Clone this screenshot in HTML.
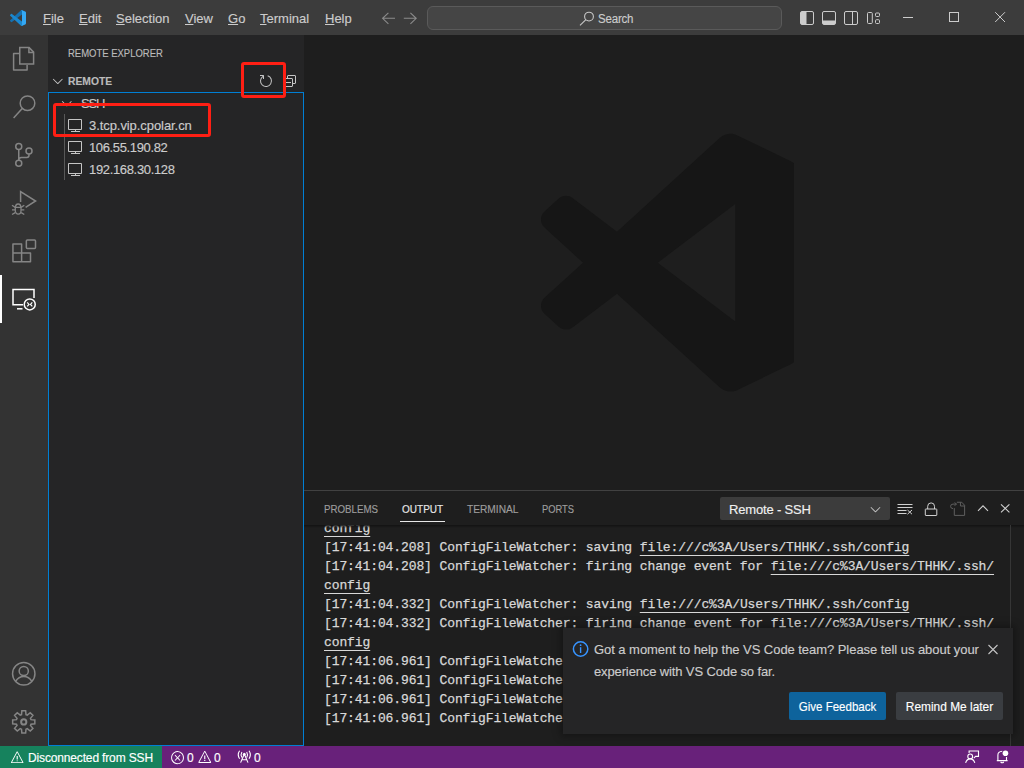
<!DOCTYPE html>
<html><head><meta charset="utf-8">
<style>
*{box-sizing:border-box;margin:0;padding:0}
html,body{width:1024px;height:768px;overflow:hidden;background:#1e1e1e;font-family:"Liberation Sans",sans-serif;}
.a{position:absolute;white-space:nowrap;-webkit-text-stroke:0.15px currentColor}
svg{position:absolute;overflow:visible}
#title{position:absolute;left:0;top:0;width:1024px;height:35px;background:#3c3c3c}
.mi{position:absolute;top:1px;height:35px;line-height:35px;font-size:13px;color:#cccccc;-webkit-text-stroke:0.15px currentColor}
.mi u{text-decoration:underline;text-underline-offset:1px;text-decoration-thickness:1px}
#act{position:absolute;left:0;top:35px;width:48px;height:711px;background:#333333}
#side{position:absolute;left:48px;top:35px;width:256px;height:711px;background:#252526}
#editor{position:absolute;left:304px;top:35px;width:720px;height:456px;background:#1e1e1e}
#panel{position:absolute;left:304px;top:490px;width:720px;height:256px;background:#1e1e1e;border-top:1px solid #414141}
#status{position:absolute;left:0;top:746px;width:1024px;height:22px;background:#68217a}
.pt{position:absolute;top:9px;-webkit-text-stroke:0.15px currentColor;transform-origin:0 0;height:16px;line-height:16px;font-size:11px;white-space:nowrap}
.ol{position:absolute;left:0;height:19px;line-height:19px;font-family:"Liberation Mono",monospace;font-size:13px;letter-spacing:-0.1px;color:#d8d8d8;-webkit-text-stroke:0.25px #d8d8d8;white-space:pre}
.ol u{text-decoration:underline;text-underline-offset:4px}
</style></head><body>
<div id="title">
  <svg style="left:10px;top:10px" width="16" height="16" viewBox="0 0 100 100">
    <path fill="#1570b0" d="M96.4614 10.7962L75.8569 0.875542C73.4719 -0.272773 70.6217 0.211611 68.75 2.08333L1.29858 63.5832C-0.515693 65.2373 -0.513607 68.0937 1.30308 69.7452L6.81272 74.754C8.29793 76.1042 10.5347 76.2036 12.1338 74.9905L93.3609 13.3699C96.086 11.3026 100 13.2462 100 16.6667V16.4275C100 14.0265 98.6246 11.8378 96.4614 10.7962Z"/>
    <path fill="#1a88d0" d="M96.4614 89.2038L75.8569 99.1245C73.4719 100.273 70.6217 99.7884 68.75 97.9167L1.29858 36.4169C-0.515693 34.7627 -0.513607 31.9063 1.30308 30.2548L6.81272 25.246C8.29793 23.8958 10.5347 23.7964 12.1338 25.0095L93.3609 86.6301C96.086 88.6974 100 86.7538 100 83.3334V83.5726C100 85.9735 98.6246 88.1622 96.4614 89.2038Z"/>
    <path fill="#34a8f4" d="M75.8578 99.1263C73.4721 100.274 70.6219 99.7885 68.75 97.9166C71.0564 100.223 75 98.5895 75 95.3278V4.67213C75 1.41039 71.0564 -0.223106 68.75 2.08329C70.6219 0.211402 73.4721 -0.273666 75.8578 0.873633L96.4587 10.7807C98.6234 11.8217 100 14.0112 100 16.4132V83.5871C100 85.9891 98.6234 88.1786 96.4586 89.2196L75.8578 99.1263Z"/>
  </svg>
  <div class="mi" style="left:43px"><u>F</u>ile</div>
  <div class="mi" style="left:79px"><u>E</u>dit</div>
  <div class="mi" style="left:116px"><u>S</u>election</div>
  <div class="mi" style="left:185px"><u>V</u>iew</div>
  <div class="mi" style="left:228px"><u>G</u>o</div>
  <div class="mi" style="left:260px"><u>T</u>erminal</div>
  <div class="mi" style="left:325px"><u>H</u>elp</div>
  <svg style="left:0;top:0" width="1024" height="35" fill="none" stroke="#8b8b8b" stroke-width="1.1">
    <path d="M388.4 12.8L382.6 18.3L388.4 23.8M382.6 18.3H395"/>
    <path d="M410.4 12.8L416.2 18.3L410.4 23.8M416.2 18.3H403.8"/>
  </svg>
  <div style="position:absolute;left:427px;top:6px;width:355px;height:24px;border:1px solid #5a5a5a;border-radius:6px;background:#454545"></div>
  <svg style="left:0;top:0" width="1024" height="35" fill="none" stroke="#c8c8c8" stroke-width="1.1">
    <circle cx="589" cy="16.6" r="4.4"/>
    <path d="M585.9 19.7L580 25.4"/>
  </svg>
  <div class="a" style="left:598px;top:10px;height:18px;line-height:18px;font-size:12.5px;color:#cccccc;letter-spacing:-0.2px;transform:scaleX(0.92);transform-origin:0 0">Search</div>
  <svg style="left:0;top:0" width="1024" height="35" fill="none" stroke="#cccccc" stroke-width="1">
    <rect x="800.5" y="11.5" width="13" height="13" rx="1.5"/>
    <rect x="801" y="12" width="5.5" height="12" fill="#cccccc" stroke="none"/>
    <rect x="822.5" y="11.5" width="13" height="13" rx="1.5"/>
    <rect x="823" y="20.5" width="12" height="3.5" fill="#cccccc" stroke="none"/>
    <rect x="844.5" y="11.5" width="13" height="13" rx="1.5"/>
    <path d="M852.5 11.5V24.5"/>
    <rect x="867.5" y="12.5" width="4.8" height="11" rx="1"/>
    <rect x="875.5" y="13" width="4" height="3.5" rx="1"/>
    <rect x="875.5" y="19.7" width="4" height="3.8" rx="1"/>
    <path d="M903 17.5H913"/>
    <rect x="949.5" y="12.5" width="9" height="9"/>
    <path d="M995.2 12.2L1005 22M1005 12.2L995.2 22"/>
  </svg>
</div>
<div id="act">
  <svg style="left:0;top:0" width="48" height="711" fill="none" stroke="#858585" stroke-width="1.5" stroke-linejoin="miter">
    <!-- files -->
    <path d="M19.6 18.6H13.6V34.9H27.1V29.9" stroke-linejoin="round"/>
    <path d="M19.75 12.6H29.1L33.6 17.1V29.1H19.75Z"/>
    <path d="M28.9 12.6V17.6H33.6"/>
    <!-- search -->
    <circle cx="27.5" cy="68.2" r="7.3"/>
    <path d="M22.2 73.6L13.6 83"/>
    <!-- scm -->
    <circle cx="18.75" cy="111.4" r="3"/>
    <circle cx="29" cy="116" r="3"/>
    <circle cx="18.75" cy="128.2" r="3"/>
    <path d="M18.75 114.4V125.2M29 119V120.3Q29 122.5 26.8 122.5H21.5Q18.75 122.5 18.75 125.2"/>
    <!-- debug -->
    <path d="M20.6 167V156.6L35.6 166L25.6 172.4"/>
    <path d="M15.5 172.4A2.65 3.4 0 0 1 20.8 172.4Z" stroke-width="1.3"/>
    <path d="M15.3 172.4V175.8A2.85 3.4 0 0 0 21 175.8V172.4" stroke-width="1.3"/>
    <path d="M12 170.2L15.2 172.4M12 174.8H15.2M12 179.5L15.2 177.6M24.3 170.2L21.1 172.4M24.3 174.8H21.1M24.3 179.5L21.1 177.6" stroke-width="1.3"/>
    <!-- extensions -->
    <path d="M12.95 209.05H21.6V226.65H12.95ZM12.95 218H30.5V226.65H21.6" stroke-linejoin="round"/>
    <rect x="26.35" y="205" width="9.15" height="8.6" rx="1"/>
  </svg>
  <div style="position:absolute;left:0;top:240px;width:2px;height:48px;background:#ffffff"></div>
  <svg style="left:0;top:240px" width="48" height="48" fill="none" stroke="#ffffff" stroke-width="1.5">
    <path d="M23 29.65H13V14.5H34V23"/>
    <path d="M17 33.8H22.5"/>
    <circle cx="29.75" cy="29.4" r="5.5" fill="#333333"/>
    <path d="M27.2 27.4L29 29.4L27.2 31.4M32.3 27.4L30.5 29.4L32.3 31.4" stroke-width="1.2"/>
  </svg>
  <svg style="left:0;top:0" width="48" height="711" fill="none" stroke="#858585" stroke-width="1.5">
    <!-- account -->
    <circle cx="23.75" cy="638.75" r="11.2"/>
    <circle cx="23.75" cy="636" r="4.6"/>
    <path d="M15.6 646.5Q18.5 641.6 23.75 641.6Q29 641.6 31.9 646.5"/>
    <!-- gear -->
    <path d="M21.50 679.64 L21.85 675.81 L25.65 675.81 L26.00 679.64 L27.30 680.18 L30.24 677.71 L32.94 680.41 L30.47 683.35 L31.01 684.65 L34.84 685.00 L34.84 688.80 L31.01 689.15 L30.47 690.45 L32.94 693.39 L30.24 696.09 L27.30 693.62 L26.00 694.16 L25.65 697.99 L21.85 697.99 L21.50 694.16 L20.20 693.62 L17.26 696.09 L14.56 693.39 L17.03 690.45 L16.49 689.15 L12.66 688.80 L12.66 685.00 L16.49 684.65 L17.03 683.35 L14.56 680.41 L17.26 677.71 L20.20 680.18Z"/>
    <circle cx="23.75" cy="686.9" r="2.6" stroke-width="2"/>
  </svg>
</div>
<div id="side">
  <div class="a" style="left:20px;top:10px;height:16px;line-height:16px;font-size:11px;color:#bbbbbb;transform:scaleX(0.862);transform-origin:0 0">REMOTE EXPLORER</div>
  <svg style="left:0;top:0" width="256" height="120" fill="#c5c5c5">
    <path transform="translate(1.8,38)" d="M7.976 10.072l4.357-4.357.62.618L8.284 11h-.618L3 6.333l.619-.618 4.357 4.357z"/>
    <path transform="translate(210,38)" d="M4.681 3H2V2h3.5l.5.5V6H5V4a5 5 0 1 0 4.53-.761l.302-.954A6 6 0 1 1 4.681 3z"/>
    <path transform="translate(234,38)" d="M9 9H4v1h5V9z"/>
    <path transform="translate(234,38)" fill-rule="evenodd" d="M5 3l1-1h7l1 1v7l-1 1h-2v2l-1 1H3l-1-1V6l1-1h2V3zm1 2h4l1 1v4h2V3H6v2zm4 1H3v7h7V6z"/>
    <path transform="translate(10.8,60.2)" d="M7.976 10.072l4.357-4.357.62.618L8.284 11h-.618L3 6.333l.619-.618 4.357 4.357z"/>
  </svg>
  <div class="a" style="left:20px;top:38px;height:16px;line-height:16px;font-size:11px;font-weight:bold;color:#bbbbbb;transform:scaleX(0.936);transform-origin:0 0">REMOTE</div>
  <div style="position:absolute;left:0;top:57px;width:256px;height:654px;border:1px solid #007fd4"></div>
  <div class="a" style="left:33px;top:58px;height:22px;line-height:22px;font-size:13px;color:#cccccc;letter-spacing:-1.2px">SSH</div>
  <div style="position:absolute;left:16px;top:79px;width:1px;height:66px;background:#585858"></div>
  <svg style="left:0;top:0" width="256" height="200" fill="none" stroke="#c5c5c5" stroke-width="1">
    <path d="M20.5 84.5H33.5V94.5H20.5ZM23 96.5H32M27.5 95V96"/>
    <path d="M20.5 106.5H33.5V116.5H20.5ZM23 118.5H32M27.5 117V118"/>
    <path d="M20.5 128.5H33.5V138.5H20.5ZM23 140.5H32M27.5 139V140"/>
  </svg>
  <div class="a" style="left:41px;top:80px;height:22px;line-height:22px;font-size:13px;color:#cccccc;letter-spacing:-0.07px">3.tcp.vip.cpolar.cn</div>
  <div class="a" style="left:41px;top:102px;height:22px;line-height:22px;font-size:13px;color:#cccccc;letter-spacing:-0.36px">106.55.190.82</div>
  <div class="a" style="left:41px;top:124px;height:22px;line-height:22px;font-size:13px;color:#cccccc;letter-spacing:-0.34px">192.168.30.128</div>
  <div style="position:absolute;left:193px;top:27px;width:45px;height:36px;border:3px solid #ff1f14;border-radius:3px"></div>
  <div style="position:absolute;left:5px;top:68px;width:158px;height:34px;border:3px solid #ff1f14;border-radius:3px"></div>
</div>
<div id="editor">
  <svg style="left:0;top:0" width="720" height="456">
    <defs><clipPath id="lc"><rect x="0" y="0" width="489.9" height="456"/></clipPath></defs>
    <g clip-path="url(#lc)">
    <path fill="#161616" transform="translate(236.95,98.2) scale(2.59)" d="M96.46 10.8L75.86 0.87C73.48-0.28 70.64 0.2 68.77 2.07L29.36 38.04 12.19 25.01C10.59 23.8 8.35 23.9 6.87 25.25L1.36 30.26C-0.45 31.91-0.45 34.77 1.36 36.42L16.25 50 1.36 63.58C-0.45 65.24-0.45 68.09 1.36 69.75L6.87 74.75C8.35 76.1 10.59 76.2 12.19 74.99L29.36 61.96 68.77 97.92C70.64 99.8 73.48 100.28 75.86 99.13L96.46 89.21C98.62 88.17 100 85.98 100 83.58V16.42C100 14.01 98.62 11.82 96.46 10.8ZM75.02 72.7L45.11 50 75.02 27.3V72.7Z"/>
    </g>
  </svg>
</div>
<div id="panel"><div style="position:absolute;left:0;top:1px;width:720px;height:254px">
  <div class="pt" style="left:20px;color:#9d9d9d;transform:scaleX(0.885)">PROBLEMS</div>
  <div class="pt" style="left:98px;color:#e7e7e7;transform:scaleX(0.91)">OUTPUT</div>
  <div style="position:absolute;left:96px;top:29px;width:45px;height:1px;background:#e7e7e7"></div>
  <div class="pt" style="left:163px;color:#9d9d9d;transform:scaleX(0.925)">TERMINAL</div>
  <div class="pt" style="left:238px;color:#9d9d9d;transform:scaleX(0.85)">PORTS</div>
  <div style="position:absolute;left:416px;top:5px;width:170px;height:23px;background:#3c3c3c;border-radius:2px"></div>
  <div class="a" style="left:425px;top:8px;height:19px;line-height:19px;font-size:13px;color:#f0f0f0;letter-spacing:-0.17px">Remote - SSH</div>
  <svg style="left:0;top:0" width="720" height="40" fill="#c5c5c5">
    <path transform="translate(563.5,9.2)" d="M7.976 10.072l4.357-4.357.62.618L8.284 11h-.618L3 6.333l.619-.618 4.357 4.357z"/>
  </svg>
  <svg style="left:0;top:0" width="720" height="40" fill="none" stroke="#d0d0d0" stroke-width="1">
    <path d="M593.5 12.5H608.5M593.5 15.5H608.5M593.5 18.5H602.5M593.5 21.5H602.5"/>
    <path d="M603.5 18L608 22.2M608 18L603.5 22.2"/>
    <rect x="621.3" y="17" width="11.5" height="6.5" rx="0.5"/>
    <path d="M623.7 17V14.3A3.4 3.4 0 0 1 630.5 14.3V17"/>
  </svg>
  <svg style="left:0;top:0" width="720" height="40" fill="none" stroke="#5e5e5e" stroke-width="1">
    <path d="M650.3 16.1V23.4H660.6V13.25L657.75 10.25H652.9"/>
    <path d="M656.45 10.25V14H660.6"/>
    <path d="M649 16.6A2.4 2.25 0 0 1 649 12.1H652.4M650.7 10.4L652.4 12.1L650.7 13.8"/>
  </svg>
  <svg style="left:0;top:0" width="720" height="40" fill="none" stroke="#d0d0d0" stroke-width="1.1">
    <path d="M674 18.8L679 13.8L684 18.8"/>
    <path d="M697 12.3L705.4 20.4M705.4 12.3L697 20.4"/>
  </svg>
  <div style="position:absolute;left:0;top:33px;width:720px;height:221px;overflow:hidden">
    <div style="position:absolute;left:20px;top:-6px;width:690px">
<div class="ol" style="top:0px"><u>config</u></div>
<div class="ol" style="top:19px">[17:41:04.208] ConfigFileWatcher: saving <u>file:///c%3A/Users/THHK/.ssh/config</u></div>
<div class="ol" style="top:38px">[17:41:04.208] ConfigFileWatcher: firing change event for <u>file:///c%3A/Users/THHK/.ssh/</u></div>
<div class="ol" style="top:57px"><u>config</u></div>
<div class="ol" style="top:76px">[17:41:04.332] ConfigFileWatcher: saving <u>file:///c%3A/Users/THHK/.ssh/config</u></div>
<div class="ol" style="top:95px">[17:41:04.332] ConfigFileWatcher: firing change event for <u>file:///c%3A/Users/THHK/.ssh/</u></div>
<div class="ol" style="top:114px"><u>config</u></div>
<div class="ol" style="top:133px">[17:41:06.961] ConfigFileWatcher: saving <u>file:///c%3A/Users/THHK/.ssh/config</u></div>
<div class="ol" style="top:152px">[17:41:06.961] ConfigFileWatcher: firing change event for <u>file:///c%3A/Users/THHK/.ssh/</u></div>
<div class="ol" style="top:171px">[17:41:06.961] ConfigFileWatcher: saving <u>file:///c%3A/Users/THHK/.ssh/config</u></div>
<div class="ol" style="top:190px">[17:41:06.961] ConfigFileWatcher: firing change event for <u>file:///c%3A/Users/THHK/.ssh/</u></div>
    </div>
    <div style="position:absolute;left:0;top:0;width:720px;height:3px;background:linear-gradient(#121212,rgba(0,0,0,0))"></div>
    <div style="position:absolute;left:706px;top:0;width:1px;height:221px;background:#363636"></div>
  </div>
</div>
</div>
<div id="notif" style="position:absolute;left:563px;top:628px;width:450px;height:106px;background:#252526;box-shadow:0 0 8px 2px rgba(0,0,0,0.36)">
  <svg style="left:0;top:0" width="450" height="106">
    <circle cx="17.6" cy="21" r="7.2" fill="none" stroke="#3794ff" stroke-width="1.5"/>
    <rect x="16.9" y="19.2" width="1.4" height="5.8" fill="#3794ff"/>
    <circle cx="17.6" cy="17.2" r="0.9" fill="#3794ff"/>
  </svg>
  <div class="a" style="left:31px;top:11px;height:22px;line-height:22px;font-size:13px;color:#cccccc;letter-spacing:-0.05px">Got a moment to help the VS Code team? Please tell us about your</div>
  <div class="a" style="left:31px;top:33px;height:22px;line-height:22px;font-size:13px;color:#cccccc;letter-spacing:-0.13px">experience with VS Code so far.</div>
  <svg style="left:0;top:0" width="450" height="106" fill="none" stroke="#c5c5c5" stroke-width="1.1">
    <path d="M425.5 17L434.5 26M434.5 17L425.5 26"/>
  </svg>
  <div style="position:absolute;left:226px;top:64px;width:97px;height:28px;background:#0e639c;border-radius:2px"></div>
  <div class="a" style="left:226px;top:65px;width:97px;height:28px;line-height:28px;font-size:13px;color:#ffffff;text-align:center;transform:scaleX(0.885)">Give Feedback</div>
  <div style="position:absolute;left:333px;top:64px;width:107px;height:28px;background:#3a3d41;border-radius:2px"></div>
  <div class="a" style="left:333px;top:65px;width:107px;height:28px;line-height:28px;font-size:13px;color:#ffffff;text-align:center;transform:scaleX(0.915)">Remind Me later</div>
</div>
<div id="status">
  <div style="position:absolute;left:0;top:0;width:162px;height:22px;background:#16825d"></div>
  <svg style="left:0;top:0" width="1024" height="22" fill="#ffffff">
    <path transform="translate(10,4.5) scale(0.9)" fill-rule="evenodd" d="M7.56 1h.88l6.54 12.26-.44.74H1.44L1 13.26 7.56 1zM8 2.28L2.28 13H13.7L8 2.28zM8.625 12v-1h-1.25v1h1.25zm-1.25-2V6h1.25v4h-1.25z"/>
    <path transform="translate(170.2,4.2) scale(0.93)" fill-rule="evenodd" d="M8.6 1c1.6.1 3.1.9 4.2 2 1.3 1.4 2 3.1 2 5.1 0 1.6-.6 3.1-1.6 4.4-1 1.2-2.4 2.1-4 2.4-1.6.3-3.2.1-4.6-.7-1.4-.8-2.5-2-3.1-3.5C.9 9.2.8 7.5 1.3 6c.5-1.6 1.4-2.9 2.8-3.8C5.4 1.3 7 .9 8.6 1zm.5 12.9c1.3-.3 2.5-1 3.4-2.1.8-1.1 1.3-2.4 1.2-3.8 0-1.6-.6-3.2-1.7-4.3-1-1-2.2-1.6-3.6-1.7-1.3-.1-2.700.2-3.8 1-1.1.8-1.9 1.9-2.3 3.3-.4 1.3-.4 2.7.2 4 .6 1.300 1.5 2.3 2.7 3 1.2.7 2.6.9 3.9.6zM7.9 7.5L10.3 5l.7.7-2.4 2.5 2.4 2.5-.7.7-2.4-2.5-2.4 2.5-.7-.7 2.4-2.5-2.4-2.5.7-.7 2.4 2.5z"/>
    <path transform="translate(197.4,4) scale(0.92)" fill-rule="evenodd" d="M7.56 1h.88l6.54 12.26-.44.74H1.44L1 13.26 7.56 1zM8 2.28L2.28 13H13.7L8 2.28zM8.625 12v-1h-1.25v1h1.25zm-1.25-2V6h1.25v4h-1.25z"/>
    <path d="M0 0"/>
  </svg>
  <svg style="left:0;top:0" width="1024" height="22" fill="none" stroke="#ffffff" stroke-width="1.1">
    <path d="M240.6 16.6L244.3 8L248 16.6M241.8 13.8H246.8"/>
    <path d="M241.9 6Q240.3 8.8 241.9 11.6M239.6 4.8Q236.9 8.8 239.6 12.8M246.7 6Q248.3 8.8 246.7 11.6M249 4.8Q251.7 8.8 249 12.8"/>
  </svg>
  <svg style="left:0;top:0" width="1024" height="22" fill="#ffffff"><circle cx="244.3" cy="8.3" r="1.4"/></svg>
  <div class="a" style="left:28px;top:3px;height:18px;line-height:18px;font-size:12px;color:#ffffff;letter-spacing:-0.15px">Disconnected from SSH</div>
  <div class="a" style="left:187px;top:3px;height:18px;line-height:18px;font-size:12px;color:#ffffff">0</div>
  <div class="a" style="left:214px;top:3px;height:18px;line-height:18px;font-size:12px;color:#ffffff">0</div>
  <div class="a" style="left:254px;top:3px;height:18px;line-height:18px;font-size:12px;color:#ffffff">0</div>
  <svg style="left:0;top:0" width="1024" height="22" fill="none" stroke="#ffffff" stroke-width="1.1">
    <circle cx="970.2" cy="10.4" r="2.4"/>
    <path d="M965.6 16.8Q966.8 12.9 970.2 12.9Q973.6 12.9 974.8 16.8"/>
    <path d="M969.1 7V5H978.5V10.4H975.6L973.8 12.2"/>
    <path d="M997.9 14.6V9Q997.9 5.6 1002.2 5.3M1006.5 10.9V14.6M996.8 14.6H1007.6M1000.6 16Q1002.2 17.4 1003.8 16"/>
  </svg>
  <svg style="left:0;top:0" width="1024" height="22" fill="#ffffff">
    <circle cx="1005.45" cy="7.3" r="2.8"/>
  </svg>
</div>
</body></html>
